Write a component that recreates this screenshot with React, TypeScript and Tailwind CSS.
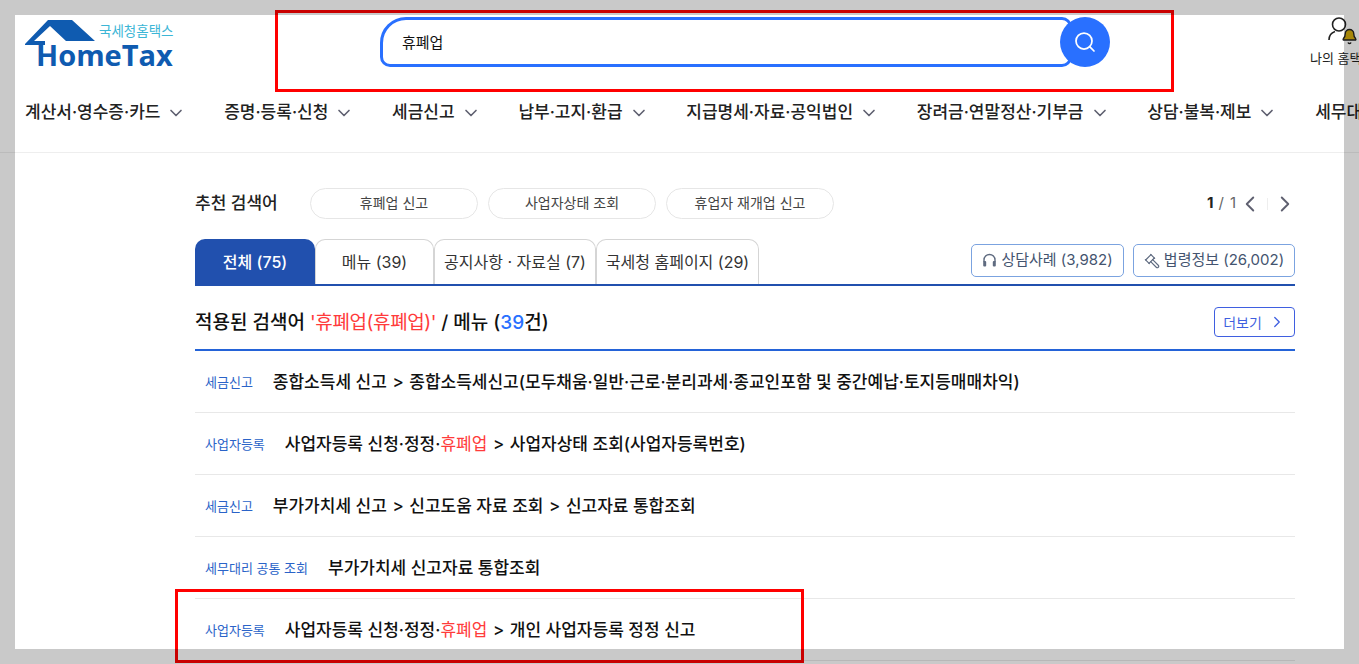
import { Search, ChevronDown, ChevronLeft, ChevronRight, Gavel, Bell } from "lucide-react";

const font = { fontFamily: 'Inter, "Noto Sans CJK KR", "Noto Sans", sans-serif' };

const nav = [
  "계산서·영수증·카드",
  "증명·등록·신청",
  "세금신고",
  "납부·고지·환급",
  "지급명세·자료·공익법인",
  "장려금·연말정산·기부금",
  "상담·불복·제보",
  "세무대리·납세관리",
];

function Hl() {
  return <span className="font-normal text-[#ff3b3b]">휴폐업</span>;
}

function Gt() {
  return <span className="mx-[1px]">&gt;</span>;
}

const rows = [
  { tag: "세금신고", title: <>종합소득세 신고 <Gt /> 종합소득세신고(모두채움·일반·근로·분리과세·종교인포함 및 중간예납·토지등매매차익)</> },
  { tag: "사업자등록", title: <>사업자등록 신청·정정·<Hl /> <Gt /> 사업자상태 조회(사업자등록번호)</> },
  { tag: "세금신고", title: <>부가가치세 신고 <Gt /> 신고도움 자료 조회 <Gt /> 신고자료 통합조회</> },
  { tag: "세무대리 공통 조회", title: <>부가가치세 신고자료 통합조회</> },
  { tag: "사업자등록", title: <>사업자등록 신청·정정·<Hl /> <Gt /> 개인 사업자등록 정정 신고</> },
];

export default function App() {
  return (
    <div style={font} className="relative h-[664px] w-[1359px] overflow-hidden bg-white pt-[15px]">
      <header className="h-[138px] border-b border-[#eeeeee]">
        <div className="flex h-[72px] items-start pl-[25px]">
          <div className="relative mt-[5px] h-[47px] w-[150px] shrink-0">
            <svg width="72" height="27" viewBox="0 0 72 27" className="absolute left-0 top-0">
              <path d="M0 24 L23 0 H47 L70 21 H41 L25 6 L9 21 H20 V25 H0Z" fill="#0f5bb0" />
            </svg>
            <span className="absolute left-[74px] top-[2px] whitespace-nowrap text-[13.5px] leading-[18px] text-[#3cb6d6]">국세청홈택스</span>
            <span style={{ fontFamily: '"Open Sans", sans-serif' }} className="absolute left-[11px] top-[20px] text-[29px] font-bold leading-[30px] text-[#0f5bb0]">HomeTax</span>
          </div>
          <div className="ml-[205px] mt-[2px] flex items-center">
            <div className="flex h-[50px] w-[692px] items-center rounded-[10px] rounded-tl-[26px] border-[3px] border-[#2970ff] pl-[19px] pt-[2px] text-[15px] text-[#111111]">휴폐업</div>
            <button className="z-10 -ml-[12px] flex h-[50px] w-[50px] items-center justify-center rounded-full bg-[#2970ff]">
              <Search size={24} strokeWidth={1.75} className="text-white" />
            </button>
          </div>
          <div className="relative ml-[200px] h-[72px] w-[60px] shrink-0">
            <svg width="24" height="26" viewBox="0 0 24 26" fill="none" stroke="#222222" strokeWidth="1.6" className="absolute left-[17px] top-[0px]">
              <circle cx="12" cy="9.5" r="6.5" />
              <path d="M2 25 C2 20 5 17.5 8 16.5" />
            </svg>
            <Bell size={17} strokeWidth={2} fill="#d4ac0d" className="absolute left-[31px] top-[13px] text-[#222222]" />
            <span className="absolute left-0 top-[34px] whitespace-nowrap text-[13px] leading-[18px] text-[#222222]">나의 홈택스</span>
          </div>
        </div>
        <nav className="flex h-[50px] items-center gap-[37.75px] whitespace-nowrap pl-[25px] pt-[2px]">
          {nav.map((n) => (
            <div key={n} className="flex shrink-0 items-center gap-[6px] text-[17px] font-medium text-[#222222]">
              {n}
              <ChevronDown size={20} strokeWidth={2} className="text-[#5f6070]" />
            </div>
          ))}
        </nav>
      </header>

      <main className="ml-[195px] w-[1100px]">
        <div className="mt-[35px] flex h-[31px] items-center">
          <span className="w-[115px] text-[17px] font-medium text-[#222222]">추천 검색어</span>
          <div className="flex gap-[10px]">
            {["휴폐업 신고", "사업자상태 조회", "휴업자 재개업 신고"].map((c) => (
              <div key={c} className="flex h-[31px] w-[168px] items-center justify-center rounded-full border border-[#e6e6e6] pb-[2px] text-[14px] text-[#444444]">{c}</div>
            ))}
          </div>
          <div className="-mr-[3px] ml-auto flex items-center text-[15px] text-[#666666]">
            <b className="font-bold text-[#222222]">1</b>
            <span className="ml-[5px]">/</span>
            <span className="ml-[6px]">1</span>
            <ChevronLeft size={26} strokeWidth={1.75} className="ml-[1px] text-[#5f6070]" />
            <span className="ml-[4px] h-[12px] w-px bg-[#eeeeee]" />
            <ChevronRight size={26} strokeWidth={1.75} className="ml-[4px] text-[#5f6070]" />
          </div>
        </div>

        <div className="mt-[20px] flex h-[47px] items-end border-b-2 border-[#2150ae]">
          <div className="flex h-[45px] w-[120px] items-center justify-center rounded-t-[10px] bg-[#2150ae] text-[16px] font-medium text-white">전체 (75)</div>
          <div className="flex h-[45px] w-[119px] items-center justify-center rounded-t-[10px] border border-b-0 border-[#d5d5d5] text-[16px] text-[#333333]">메뉴 (39)</div>
          <div className="flex h-[45px] w-[162px] items-center justify-center rounded-t-[10px] border border-b-0 border-[#d5d5d5] text-[16px] text-[#333333]">공지사항 · 자료실 (7)</div>
          <div className="flex h-[45px] w-[163px] items-center justify-center rounded-t-[10px] border border-b-0 border-[#d5d5d5] text-[16px] text-[#333333]">국세청 홈페이지 (29)</div>
          <div className="mb-[7px] ml-auto flex gap-[9px]">
            <div className="flex h-[33px] w-[153px] items-center justify-center gap-[4px] rounded-[5px] border border-[#7ba3e0] text-[15px] text-[#44546f]">
              <svg width="15" height="15" viewBox="0 0 15 15" fill="none">
                <path d="M2 9 V7 a5.5 5.5 0 0 1 11 0 V9" stroke="#5f6b80" strokeWidth="1.4" />
                <rect x="1.2" y="8" width="3" height="5.5" rx="1" fill="#5f6b80" />
                <rect x="10.8" y="8" width="3" height="5.5" rx="1" fill="#5f6b80" />
              </svg>
              상담사례 (3,982)
            </div>
            <div className="flex h-[33px] w-[162px] items-center justify-center gap-[4px] rounded-[5px] border border-[#7ba3e0] text-[15px] text-[#44546f]">
              <Gavel size={16} strokeWidth={1.75} className="-scale-x-100 text-[#5f6b80]" />법령정보 (26,002)
            </div>
          </div>
        </div>

        <div className="flex h-[65px] items-center justify-between border-b-2 border-[#2463d8] pt-[9px]">
          <h2 className="pt-[2px] text-[19px] font-medium leading-[26px] text-[#111111]">
            적용된 검색어 <span className="font-normal tracking-[-0.4px] text-[#ff3b3b]">'휴폐업(휴폐업)'</span> / 메뉴 (<span className="font-medium text-[#2970ff]">39</span>건)
          </h2>
          <div className="flex h-[30px] w-[81px] items-center justify-center gap-[6px] rounded-[4px] border border-[#3f5fe0] text-[14px] text-[#3f5fe0]">
            더보기 <ChevronRight size={18} strokeWidth={1.75} />
          </div>
        </div>

        {rows.map((r, i) => (
          <div key={i} className="flex h-[62px] items-center whitespace-nowrap border-b border-[#e8e8e8] pl-[10px] pt-[3px]">
            <span className="mr-[20px] text-[13px] text-[#2a63c8]">{r.tag}</span>
            <span className="text-[17px] font-medium text-[#111111]">{r.title}</span>
          </div>
        ))}
      </main>

      <div className="absolute left-[275px] top-[10px] h-[82px] w-[899px] border-[3px] border-[#ff0000]" />
      <div className="absolute left-[175px] top-[589px] h-[74px] w-[629px] border-[3px] border-[#ff0000]" />
      <div className="pointer-events-none absolute inset-0 border-[15px] border-black/[0.21]" />
    </div>
  );
}
